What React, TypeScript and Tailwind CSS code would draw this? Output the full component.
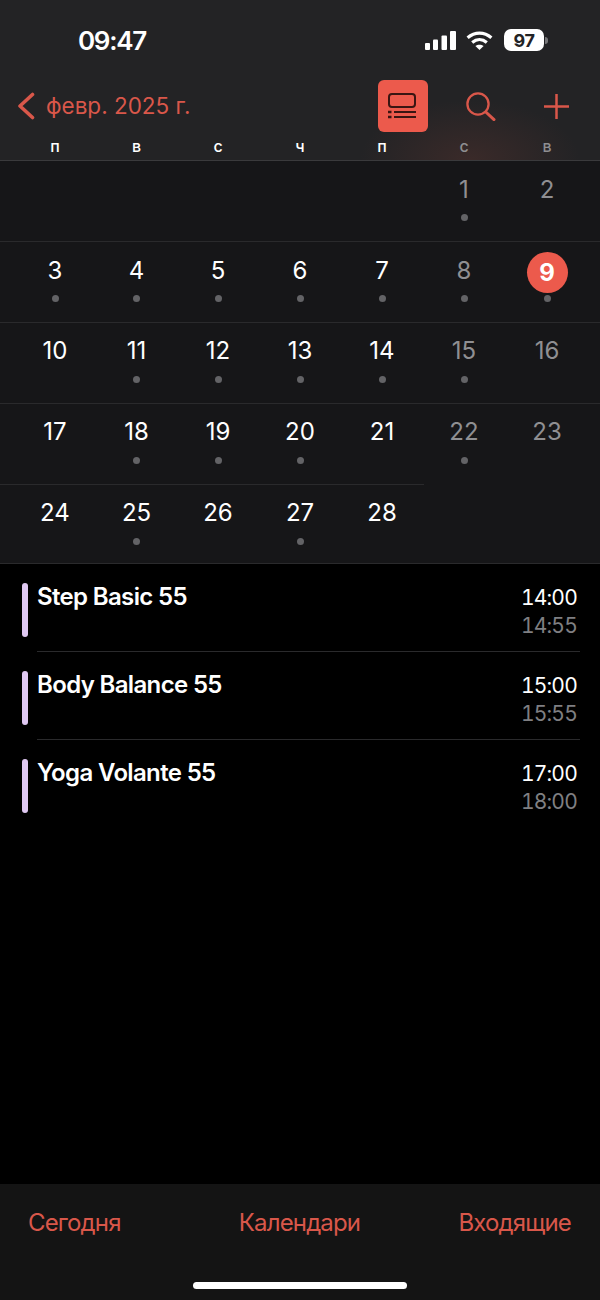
import React from "react";

const FONT = "font-['Inter','Noto_Sans',sans-serif]";
const RED = "text-[#d9574a]";
const COLS = "grid grid-cols-[82px_81px_82px_82px_82px_82px_84px] pl-[14px]";

type Day = { n?: number; dot?: boolean; today?: boolean; dim?: boolean };

const weeks: Day[][] = [
  [{}, {}, {}, {}, {}, { n: 1, dot: true, dim: true }, { n: 2, dim: true }],
  [
    { n: 3, dot: true },
    { n: 4, dot: true },
    { n: 5, dot: true },
    { n: 6, dot: true },
    { n: 7, dot: true },
    { n: 8, dot: true, dim: true },
    { n: 9, dot: true, today: true },
  ],
  [
    { n: 10 },
    { n: 11, dot: true },
    { n: 12, dot: true },
    { n: 13, dot: true },
    { n: 14, dot: true },
    { n: 15, dot: true, dim: true },
    { n: 16, dim: true },
  ],
  [
    { n: 17 },
    { n: 18, dot: true },
    { n: 19, dot: true },
    { n: 20, dot: true },
    { n: 21 },
    { n: 22, dot: true, dim: true },
    { n: 23, dim: true },
  ],
  [
    { n: 24 },
    { n: 25, dot: true },
    { n: 26 },
    { n: 27, dot: true },
    { n: 28 },
    {},
    {},
  ],
];

const events = [
  { title: "Step Basic 55", start: "14:00", end: "14:55" },
  { title: "Body Balance 55", start: "15:00", end: "15:55" },
  { title: "Yoga Volante 55", start: "17:00", end: "18:00" },
];

function Cell({ d, raised }: { d: Day; raised: boolean }) {
  return (
    <div className={raised ? "flex h-[81px] flex-col items-center pt-[8px]" : "flex h-[81px] flex-col items-center pt-[9px]"}>
      <div
        className={
          d.today
            ? "mt-px flex h-[41px] w-[41px] items-center justify-center rounded-full bg-[#ec5a4c] text-[24px] font-bold text-white"
            : d.dim
              ? "flex h-[40px] w-[40px] items-center justify-center text-[24px] text-[#8f8f92]"
              : "flex h-[40px] w-[40px] items-center justify-center text-[24px] text-white"
        }
      >
        {d.n}
      </div>
      {d.dot && (
        <div
          className={
            d.today
              ? "mt-[2px] h-[7px] w-[7px] rounded-full bg-[#636366]"
              : raised
                ? "mt-[5px] h-[7px] w-[7px] rounded-full bg-[#636366]"
                : "mt-[4px] h-[7px] w-[7px] rounded-full bg-[#636366]"
          }
        />
      )}
    </div>
  );
}

function Week({ days, index }: { days: Day[]; index: number }) {
  return (
    <div className="relative">
      <div className={COLS}>
        {days.map((d, i) => (
          <Cell key={i} d={d} raised={index >= 2} />
        ))}
      </div>
      {index < 3 && <div className="absolute bottom-0 left-0 right-0 h-px bg-[#2a2a2c]" />}
      {index === 3 && <div className="absolute bottom-0 left-0 h-px w-[424px] bg-[#2a2a2c]" />}
    </div>
  );
}

export default function App() {
  return (
    <div className={`flex h-[1300px] w-[600px] flex-col overflow-hidden bg-black ${FONT}`}>
      <header className="h-[161px] shrink-0 border-b border-[#3a3a3c] bg-[#232325] bg-[radial-gradient(ellipse_110px_60px_at_470px_160px,#3a2a29,transparent)]">
        <div className="flex h-[80px] items-start pt-[26px]">
          <div className="ml-[78px] text-[26px] leading-[30px] font-semibold tracking-[-1.3px] text-white">09:47</div>
          <div className="ml-auto mr-[52px] flex items-center pt-[3px]">
            <svg width="31" height="19" viewBox="0 0 31 19" fill="#fff">
              <rect x="0" y="12" width="5" height="7" rx="1" />
              <rect x="8" y="8.5" width="5" height="10.5" rx="1" />
              <rect x="16.5" y="4.5" width="5.5" height="14.5" rx="1" />
              <rect x="25" y="0" width="6" height="19" rx="1" />
            </svg>
            <svg className="ml-[10px]" width="27" height="19" viewBox="0 0 27 19" fill="none" stroke="#fff" strokeWidth="3.2">
              <path d="M1.6 6.8C8.8.6 18.2.6 25.4 6.8" />
              <path d="M6.2 11.4C10.6 7.8 16.4 7.8 20.8 11.4" />
              <path d="M13.5 19 9.4 15.1C11.8 13.2 15.2 13.2 17.6 15.1Z" fill="#fff" stroke="none" />
            </svg>
            <div className="ml-[11px] flex items-center gap-[1px]">
              <div className="flex h-[22px] w-[40px] items-center justify-center rounded-[7px] bg-white text-[18px] font-bold tracking-[-0.5px] text-[#232325]">
                97
              </div>
              <div className="h-[7px] w-[3px] rounded-r-full bg-[#77777a]" />
            </div>
          </div>
        </div>

        <div className="flex h-[52px] items-center">
          <svg className="ml-[17px]" width="19" height="28" viewBox="0 0 19 28" fill="none" stroke="#d9574a" strokeWidth="3.6" strokeLinecap="round" strokeLinejoin="round">
            <path d="M15.5 2.5 3 14l12.5 11.5" />
          </svg>
          <span className={`ml-[10px] text-[22.5px] leading-none ${RED}`}>февр. 2025 г.</span>
          <div className="ml-[188px] flex h-[52px] w-[50px] items-center justify-center rounded-[6px] bg-[#ec5a4c]">
            <svg width="30" height="26" viewBox="0 0 30 26" fill="none" stroke="#3a1512" strokeWidth="2">
              <rect x="1" y="1" width="26" height="13" rx="3" />
              <path d="M6 19h22M6 24h22" />
              <path d="M0 19h3.5M0 24h3.5" strokeWidth="2.4" />
            </svg>
          </div>
          <svg className="ml-[38px]" width="30" height="29" viewBox="0 0 30 29" fill="none" stroke="#d9574a" strokeWidth="2.3" strokeLinecap="round">
            <circle cx="12" cy="12" r="10.6" />
            <path d="m19.8 20 8.2 7.6" strokeWidth="3" />
          </svg>
          <svg className="ml-[48px]" width="25" height="25" viewBox="0 0 25 25" fill="none" stroke="#d9574a" strokeWidth="2.5">
            <path d="M12.5 0v25M0 12.5h25" />
          </svg>
        </div>

        <div className={`mt-[3px] ${COLS} text-center text-[16px] leading-[22px] font-medium`}>
          <span className="text-white">п</span>
          <span className="text-white">в</span>
          <span className="text-white">с</span>
          <span className="text-white">ч</span>
          <span className="text-white">п</span>
          <span className="text-[#8e8e90]">с</span>
          <span className="text-[#8e8e90]">в</span>
        </div>
      </header>

      <section className="h-[403px] shrink-0 border-b border-[#2a2a2c] bg-[#161618]">
        {weeks.map((w, i) => (
          <Week key={i} days={w} index={i} />
        ))}
      </section>

      <main className="flex-1 bg-black pt-[19px]">
        {events.map((e, i) => (
          <div key={e.title} className="flex h-[88px] pl-[22px]">
            <div className="mr-[9px] h-[54px] w-[6px] rounded-full bg-[#e0c8f2]" />
            <div className={i < 2 ? "mr-[20px] flex h-[69px] flex-1 justify-between border-b border-[#2a2a2c] pr-[3px]" : "mr-[20px] flex h-[69px] flex-1 justify-between pr-[3px]"}>
              <div className="text-[24px] leading-[28px] font-semibold tracking-[-0.65px] text-white">{e.title}</div>
              <div className="pt-px text-right text-[21px] leading-[28px] tracking-[-0.8px] tabular-nums">
                <div className="text-white">{e.start}</div>
                <div className="text-[#7f7f82]">{e.end}</div>
              </div>
            </div>
          </div>
        ))}
      </main>

      <footer className="relative h-[116px] shrink-0 bg-[#141414]">
        <div className={`grid grid-cols-3 pl-[28px] pr-[29px] pt-[25px] text-[24px] leading-[28px] tracking-[-0.85px] ${RED}`}>
          <span className="justify-self-start">Сегодня</span>
          <span className="justify-self-center">Календари</span>
          <span className="justify-self-end">Входящие</span>
        </div>
        <div className="absolute bottom-[11px] left-[193px] h-[7px] w-[214px] rounded-full bg-white" />
      </footer>
    </div>
  );
}
